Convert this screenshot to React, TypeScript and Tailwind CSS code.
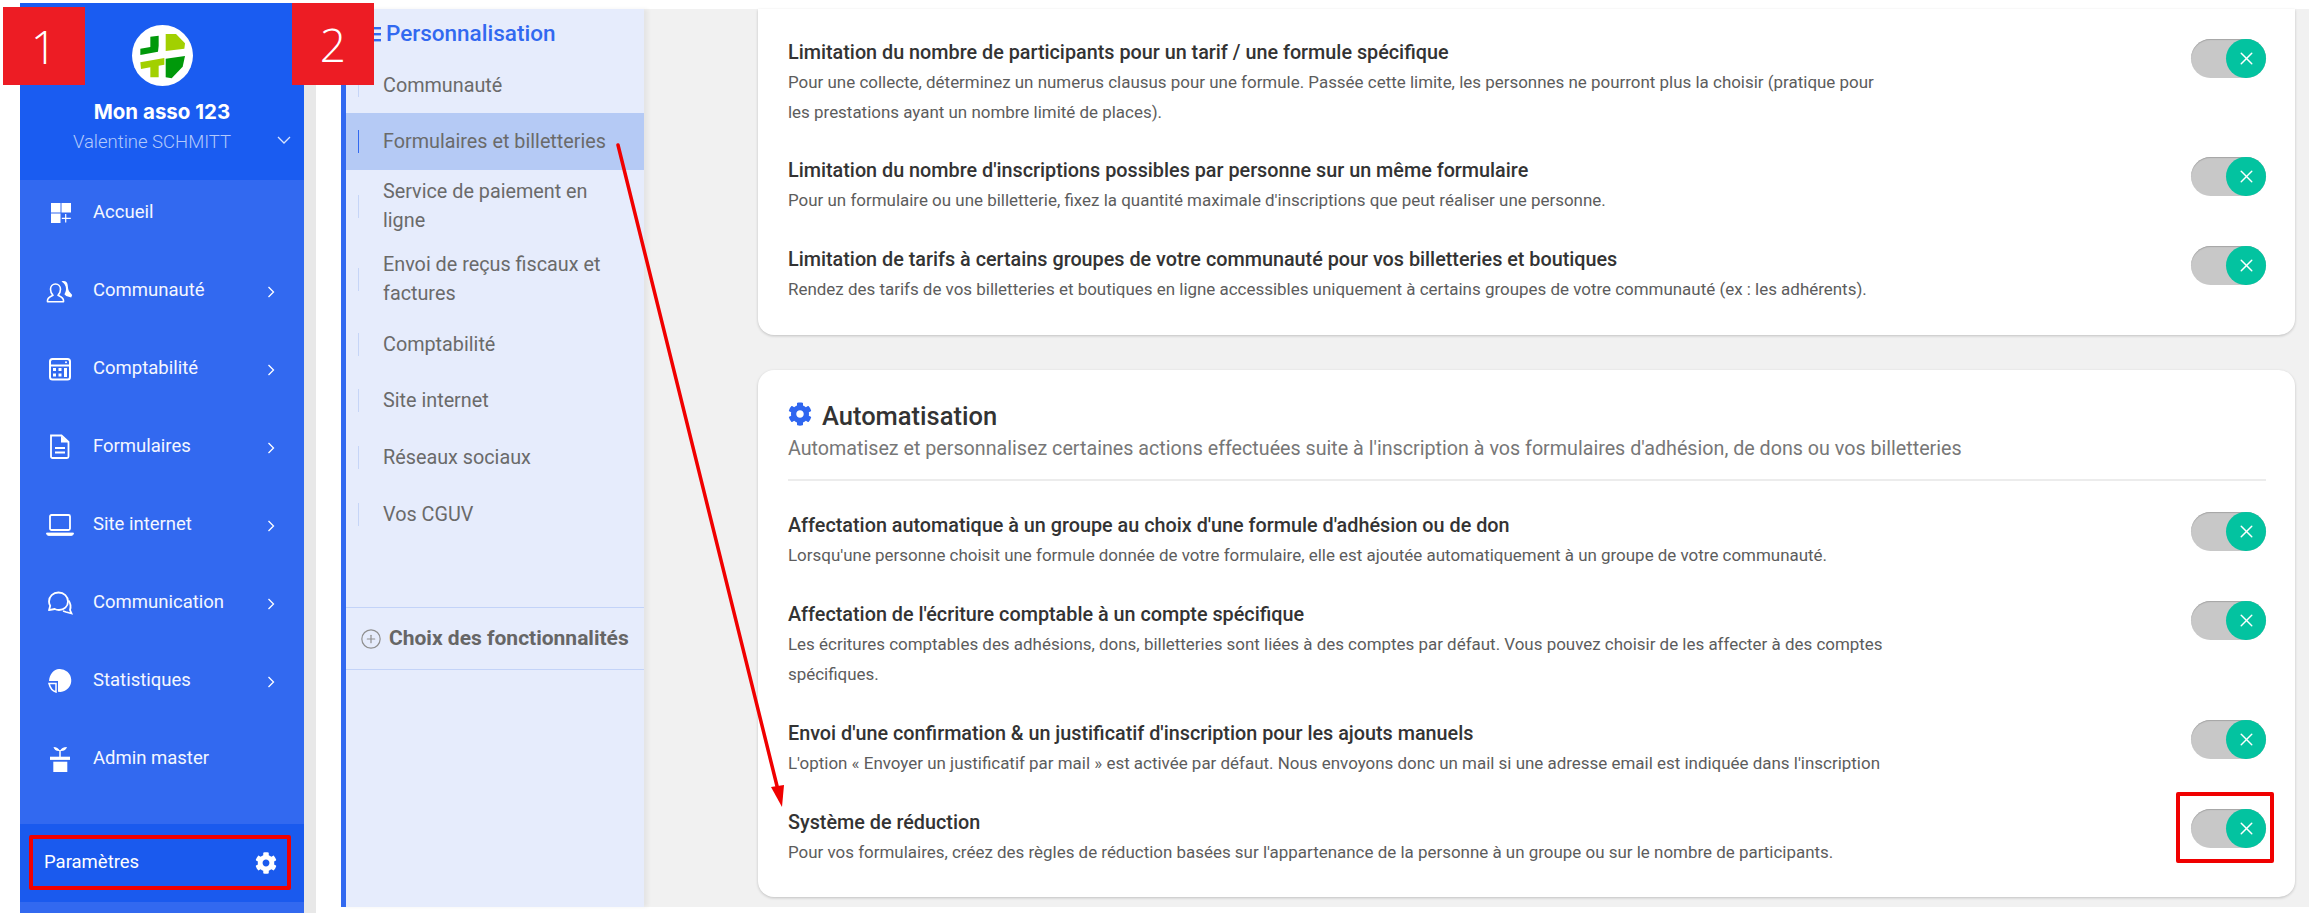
import React from "react";
import { X, CirclePlus } from "lucide-react";
import { FaCog } from "react-icons/fa";

const Chev = () => (
  <svg width="8" height="12" viewBox="0 0 8 12" fill="none" stroke="#fff" strokeWidth="1.3" className="absolute left-[247px] top-[27px]">
    <polyline points="1.5,1 6.5,6 1.5,11" />
  </svg>
);

const icons: Record<string, React.ReactNode> = {
  accueil: (
    <svg width="28" height="26" viewBox="0 0 28 26" fill="#fff">
      <rect x="5" y="3" width="9.5" height="9.5" /><rect x="15.5" y="3" width="9.5" height="9.5" /><rect x="5" y="13.5" width="9.5" height="9.5" />
      <path d="M19.7 14v8.5M15.8 18.3h9" stroke="#fff" strokeWidth="1.2" />
    </svg>
  ),
  communaute: (
    <svg width="28" height="26" viewBox="0 0 28 26" fill="none" stroke="#fff" strokeWidth="1.6">
      <path d="M1.5 22.5c0-3.2 3.5-4.2 5.5-5.2-1.8-1.6-2.5-3.4-2.5-6 0-3.2 2.2-5.3 5-5.3s5 2.1 5 5.3c0 2.6-.7 4.4-2.5 6 2 1 5.5 2 5.500 5.200v1.300H1.500z" strokeLinejoin="round" />
      <path d="M15.500 3.500c3.500-1.200 5.800.4 6.200 3.500.3 2.600.3 4.500 1.500 6.500l3 3.500-1 2.500-5-1.500-1.800-1.700c1-1.600 1.600-3.300 1.600-5.300 0-3.200-1.500-5.500-4.500-7.500z" fill="#fff" stroke="none" />
    </svg>
  ),
  compta: (
    <svg width="28" height="26" viewBox="0 0 28 26" fill="none" stroke="#fff" strokeWidth="2">
      <rect x="4" y="3" width="20" height="20.500" rx="2.500" />
      <path d="M4 9.500h20" />
      <g fill="#fff" stroke="none">
        <rect x="7" y="12" width="3" height="3" /><rect x="12.500" y="12" width="3" height="3" />
        <rect x="7" y="17.500" width="3" height="3" /><rect x="12.500" y="17.500" width="3" height="3" />
        <rect x="18" y="12" width="3" height="9" /><circle cx="20" cy="6.200" r="1" />
      </g>
    </svg>
  ),
  form: (
    <svg width="28" height="26" viewBox="0 0 28 26" fill="none" stroke="#fff" strokeWidth="1.800">
      <path d="M5 1.500h10.500l7 6.500v14.500a1.500 1.500 0 0 1-1.500 1.500H6.500A1.500 1.500 0 0 1 5 22.500z" />
      <path d="M15 2v6.500h7.500z" fill="#fff" stroke="none" />
      <path d="M9 14h10M9 18.500h10" strokeWidth="2" />
    </svg>
  ),
  site: (
    <svg width="28" height="26" viewBox="0 0 28 26" fill="none" stroke="#fff" strokeWidth="1.800">
      <rect x="4" y="3" width="20" height="15" rx="1.500" />
      <path d="M0.500 21h27c0 1.500-.8 2.500-2.500 2.500H3c-1.700 0-2.500-1-2.500-2.500z" fill="#fff" strokeWidth="0.800" />
    </svg>
  ),
  comm: (
    <svg width="28" height="26" viewBox="0 0 28 26" fill="none" stroke="#fff" strokeWidth="1.800">
      <path d="M12.500 2.500c5.500 0 9.500 4 9.500 9s-4 8.500-9 8.500c-1.500 0-3-.3-4.300-1L3 20.200l1.200-4.500C3.400 14.400 3 13 3 11.500c0-5 4-9 9.500-9z" strokeLinejoin="round" />
      <path d="M22.500 10.500c2.200 3 2.500 6.500 1.500 9.500l1.500 3.500-5.500-1.500-3-1" />
    </svg>
  ),
  stats: (
    <svg width="28" height="26" viewBox="0 0 28 26" fill="#fff">
      <path d="M13 1a11.500 11.500 0 0 1 1.500 23l-2.500-.3V13H3C3.500 6 8 1 13 1z" />
      <path d="M3 15.500h7v8.500c-3.500-1-6-4.500-7-8.500z" fill="none" stroke="#fff" strokeWidth="1.500" />
    </svg>
  ),
  admin: (
    <svg width="28" height="26" viewBox="0 0 28 26" fill="#fff">
      <rect x="4" y="10.700" width="20" height="3.200" />
      <path d="M7.300 15.700h14V26h-14z" />
      <path d="M14 11V4" stroke="#fff" strokeWidth="1.500" />
      <path d="M14 5C12.500 2.500 10.500 1 7.500 1c.5 2.500 3 4.500 6.500 4zM14 5c1-2.500 3.500-4 7-4-.5 2.500-3.500 4.500-7 4z" />
    </svg>
  ),
};

const menu = [
  { k: "accueil", t: "Accueil" },
  { k: "communaute", t: "Communauté", c: 1 },
  { k: "compta", t: "Comptabilité", c: 1 },
  { k: "form", t: "Formulaires", c: 1 },
  { k: "site", t: "Site internet", c: 1 },
  { k: "comm", t: "Communication", c: 1 },
  { k: "stats", t: "Statistiques", c: 1 },
  { k: "admin", t: "Admin master" },
];

const Toggle = () => (
  <div className="mt-[2px] flex h-[39px] w-[75px] shrink-0 justify-end rounded-full bg-[#c8c8c8] shadow-[inset_0_1px_1px_#a5a5a5]">
    <div className="flex h-[39px] w-[40px] items-center justify-center rounded-full bg-[#03c3a0]">
      <X size={21} color="#fff" strokeWidth={1.7} />
    </div>
  </div>
);

const Row = ({ title, children, mt }: { title: string; children: React.ReactNode; mt: string }) => (
  <div className={`flex items-start justify-between ${mt}`}>
    <div className="w-[1105px]">
      <div className="h-[30px] whitespace-nowrap text-[19.8px] font-medium leading-[32px] text-[#333]">{title}</div>
      <div className="text-[16.950px] leading-[30px] text-[#5c5c5c]">{children}</div>
    </div>
    <Toggle />
  </div>
);

const Sub = ({ children, cls, active }: { children: React.ReactNode; cls: string; active?: boolean }) => (
  <div className={`flex items-center pl-[12px] pr-[20px] ${cls} ${active ? "bg-[#b5caf5]" : ""}`}>
    <div className={`mr-[24px] h-[23px] w-px shrink-0 ${active ? "bg-[#3269f0]" : "bg-[#c6d5f7]"}`} />
    <div className="text-[19.8px] leading-[29px] text-[#6a6a6a]">{children}</div>
  </div>
);

export default function App() {
  return (
    <div className="relative flex h-[913px] w-[2317px] overflow-hidden bg-white font-['Roboto',sans-serif]">
      {/* Sidebar */}
      <aside className="ml-[20px] mt-[3px] flex h-[910px] w-[284px] shrink-0 flex-col bg-[#3269f0] text-white">
        <div className="relative flex h-[177px] flex-col items-center bg-[#1a5cf1] pt-[22px]">
          <svg width="61" height="61" viewBox="393 75 183 183">
            <circle cx="484.500" cy="166.500" r="91.500" fill="#fff" />
            <path d="M448 110L473 107V137L471 155L418 165V146L448 141Z" fill="#00990a" />
            <path d="M494 102H525L552 130L550 146L494 153Z" fill="#a2d000" />
            <path d="M418 187L490 174V194L473 197V232H448V202L420 207Z" fill="#a2d000" />
            <path d="M494 176L552 168L545 200L512 235L494 232Z" fill="#00990a" />
          </svg>
          <div className="mt-[11px] font-['Inter',sans-serif] text-[20.5px] font-bold leading-[30px]">Mon asso 123</div>
          <div className="mt-[1px] pr-[20px] text-[18.5px] font-light leading-[28px] text-[#b3c9fb]">Valentine SCHMITT</div>
          <svg width="14" height="8" viewBox="0 0 14 8" fill="none" stroke="#d9e4fd" strokeWidth="1.300" className="absolute left-[257px] top-[133px]">
            <polyline points="1,1 7,7 13,1" />
          </svg>
        </div>
        <nav className="flex flex-col gap-[14px] pt-[1px]">
          {menu.map((m) => (
            <div key={m.t} className="relative flex h-[64px] items-center pl-[26px]">
              <div className="mr-[19px] h-[26px] w-[28px]">{icons[m.k]}</div>
              <span className="text-[18.5px] text-[#f4f7ff]">{m.t}</span>
              {m.c ? <Chev /> : null}
            </div>
          ))}
        </nav>
        <div className="mt-auto mb-[11px] flex h-[78px] items-center justify-between bg-[#1a5aee] pl-[24px] pr-[27px]">
          <span className="text-[18.500px] text-white">Paramètres</span>
          <FaCog size={22} color="#fff" />
        </div>
      </aside>
      <div className="mt-[3px] h-[910px] w-[12px] shrink-0 bg-[#e8e8e8]" />

      {/* Sub navigation */}
      <aside className="relative z-10 ml-[25px] mt-[9px] h-[898px] w-[303px] shrink-0 border-l-[5px] border-[#3269f0] bg-[#e6ecfc] shadow-[4px_0_4px_rgba(0,0,0,0.05)]">
        <div className="flex h-[49px] items-center pl-[18px]">
          <svg width="17" height="16" viewBox="0 0 17 16" fill="#3269f0" className="mr-[5px] shrink-0">
            <rect y="1" width="17" height="2.400" /><rect y="7" width="17" height="2.400" /><rect y="13" width="17" height="2.400" />
          </svg>
          <span className="text-[22.500px] font-medium text-[#3269f0]">Personnalisation</span>
        </div>
        <Sub cls="h-[55px]">Communauté</Sub>
        <Sub cls="h-[57px]" active>Formulaires et billetteries</Sub>
        <Sub cls="h-[72px]">Service de paiement en ligne</Sub>
        <Sub cls="h-[74px]">Envoi de reçus fiscaux et factures</Sub>
        <Sub cls="h-[56px]">Comptabilité</Sub>
        <Sub cls="h-[56px]">Site internet</Sub>
        <Sub cls="h-[58px]">Réseaux sociaux</Sub>
        <Sub cls="h-[57px]">Vos CGUV</Sub>
        <div className="mt-[64px] flex h-[63px] items-center border-y-[1.500px] border-[#c3d3f8] pl-[14px]">
          <CirclePlus size={22} color="#8f8f8f" strokeWidth={1.300} className="mr-[7px]" />
          <span className="text-[21px] font-bold text-[#666]">Choix des fonctionnalités</span>
        </div>
      </aside>

      {/* Main */}
      <main className="mt-[9px] h-[898px] w-[1665px] shrink-0 bg-[#f1f1f1] pl-[114px] pr-[14px]">
        <section className="h-[326px] rounded-b-[16px] bg-white pl-[30px] pr-[29px] pt-[28px] shadow-[0_1px_3px_rgba(0,0,0,0.2)]">
          <Row mt="mt-0" title="Limitation du nombre de participants pour un tarif / une formule spécifique">
            Pour une collecte, déterminez un numerus clausus pour une formule. Passée cette limite, les personnes ne pourront plus la choisir (pratique pour les prestations ayant un nombre limité de places).
          </Row>
          <Row mt="mt-[28px]" title="Limitation du nombre d'inscriptions possibles par personne sur un même formulaire">
            Pour un formulaire ou une billetterie, fixez la quantité maximale d'inscriptions que peut réaliser une personne.
          </Row>
          <Row mt="mt-[29px]" title="Limitation de tarifs à certains groupes de votre communauté pour vos billetteries et boutiques">
            Rendez des tarifs de vos billetteries et boutiques en ligne accessibles uniquement à certains groupes de votre communauté (ex : les adhérents).
          </Row>
        </section>
        <section className="mt-[35px] h-[527px] rounded-[16px] bg-white pl-[30px] pr-[29px] pt-[28px] shadow-[0_1px_3px_rgba(0,0,0,0.2)]">
          <div className="flex h-[36px] items-center">
            <FaCog size={24} color="#2f66f0" className="mr-[10px] -translate-y-[2px]" />
            <span className="text-[25.5px] font-medium text-[#333]">Automatisation</span>
          </div>
          <div className="border-b-2 border-[#ececec] pb-[15px] text-[19.7px] leading-[30px] text-[#777]">
            Automatisez et personnalisez certaines actions effectuées suite à l'inscription à vos formulaires d'adhésion, de dons ou vos billetteries
          </div>
          <Row mt="mt-[29px]" title="Affectation automatique à un groupe au choix d'une formule d'adhésion ou de don">
            Lorsqu'une personne choisit une formule donnée de votre formulaire, elle est ajoutée automatiquement à un groupe de votre communauté.
          </Row>
          <Row mt="mt-[29px]" title="Affectation de l'écriture comptable à un compte spécifique">
            Les écritures comptables des adhésions, dons, billetteries sont liées à des comptes par défaut. Vous pouvez choisir de les affecter à des comptes spécifiques.
          </Row>
          <Row mt="mt-[29px]" title="Envoi d'une confirmation & un justificatif d'inscription pour les ajouts manuels">
            L'option « Envoyer un justificatif par mail » est activée par défaut. Nous envoyons donc un mail si une adresse email est indiquée dans l'inscription
          </Row>
          <Row mt="mt-[29px]" title="Système de réduction">
            Pour vos formulaires, créez des règles de réduction basées sur l'appartenance de la personne à un groupe ou sur le nombre de participants.
          </Row>
        </section>
      </main>

      {/* Annotations over the page */}
      <div className="absolute left-[3px] top-[7px] z-20 flex h-[78px] w-[82px] items-center justify-center bg-[#ed1c24] font-['Open_Sans',sans-serif] text-[46px] font-light text-white">1</div>
      <div className="absolute left-[292px] top-[3px] z-20 flex h-[82px] w-[82px] items-center justify-center bg-[#ed1c24] font-['Open_Sans',sans-serif] text-[46px] font-light text-white">2</div>
      <div className="absolute left-[29px] top-[835px] z-20 h-[55px] w-[262px] rounded-[2px] border-[4px] border-[#f00000]" />
      <div className="absolute left-[2176px] top-[792px] z-20 h-[71px] w-[98px] rounded-[2px] border-[4px] border-[#f00000]" />
      <svg className="absolute left-0 top-0 z-20" width="2317" height="913" fill="none">
        <line x1="618" y1="145" x2="778" y2="790" stroke="#f00000" strokeWidth="3.5" strokeLinecap="round" />
        <polygon points="771,787 784,785 782,807" fill="#f00000" />
      </svg>
    </div>
  );
}
